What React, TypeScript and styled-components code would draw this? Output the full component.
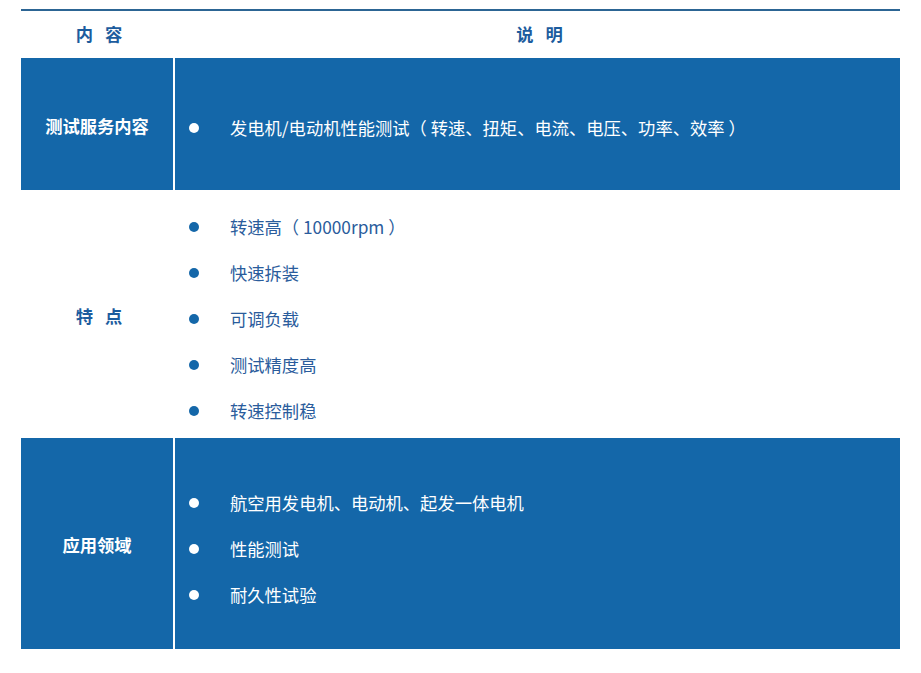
import React from "react";
import styled, { createGlobalStyle } from "styled-components";

const Global = createGlobalStyle`
  html, body { margin: 0; padding: 0; background: #fff; }
  body { font-family: "Noto Sans CJK SC", "Noto Sans", sans-serif; }
`;

const Page = styled.div`
  padding: 9px 21px 0 21px;
  width: 879px;
`;

const Table = styled.div`
  display: grid;
  grid-template-columns: 152px 2px 1fr;
  border-top: 2px solid #2c6594;
`;

const HeadCell = styled.div`
  height: 47px;
  display: flex;
  align-items: center;
  justify-content: center;
  font-size: 17.3px;
  font-weight: 700;
  letter-spacing: 4px;
  color: #1c5c9e;
  padding: 0 0 2px 8px;
  box-sizing: border-box;
`;

const Cell = styled.div<{ $blue?: boolean }>`
  background: ${(p) => (p.$blue ? "#1467a9" : "#fff")};
  display: flex;
  align-items: center;
`;

const LabelCell = styled(Cell)<{ $blue?: boolean; $spaced?: boolean }>`
  justify-content: center;
  font-size: 17.3px;
  font-weight: 700;
  letter-spacing: ${(p) => (p.$spaced ? "4px" : "0")};
  color: ${(p) => (p.$blue ? "#fff" : "#1c5c9e")};
  padding: 2px 0 0 ${(p) => (p.$spaced ? "8px" : "0")};
`;

const Divider = styled.div`
  background: #fff;
`;

const List = styled.ul<{ $blue?: boolean; $pt: number; $pb: number }>`
  list-style: none;
  margin: 0;
  padding: ${(p) => p.$pt}px 0 ${(p) => p.$pb}px 14px;
  width: 100%;
  color: ${(p) => (p.$blue ? "#fff" : "#2a5c9c")};
`;

const Item = styled.li<{ $blue?: boolean }>`
  height: 46px;
  display: flex;
  align-items: center;
  font-size: 17.3px;
  &::before {
    content: "";
    width: 10px;
    height: 10px;
    border-radius: 50%;
    margin-right: 31px;
    margin-top: 1px;
    background: ${(p) => (p.$blue ? "#fff" : "#1467a9")};
    flex: none;
  }
`;

type Row = {
  label: string;
  blue: boolean;
  spaced?: boolean;
  items: string[];
  pt: number;
  pb: number;
};

const rows: Row[] = [
  {
    label: "测试服务内容",
    blue: true,
    items: ["发电机/电动机性能测试（ 转速、扭矩、电流、电压、功率、效率 ）"],
    pt: 46,
    pb: 40,
  },
  {
    label: "特\u00a0点",
    blue: false,
    spaced: true,
    items: ["转速高（ 10000rpm ）", "快速拆装", "可调负载", "测试精度高", "转速控制稳"],
    pt: 13,
    pb: 5,
  },
  {
    label: "应用领域",
    blue: true,
    items: ["航空用发电机、电动机、起发一体电机", "性能测试", "耐久性试验"],
    pt: 41,
    pb: 32,
  },
];

export default function App() {
  return (
    <>
      <Global />
      <Page>
        <Table>
          <HeadCell>内&nbsp;容</HeadCell>
          <div />
          <HeadCell>说&nbsp;明</HeadCell>
          {rows.map((r) => (
            <React.Fragment key={r.label}>
              <LabelCell $blue={r.blue} $spaced={r.spaced}>
                {r.label}
              </LabelCell>
              <Divider />
              <Cell $blue={r.blue}>
                <List $blue={r.blue} $pt={r.pt} $pb={r.pb}>
                  {r.items.map((t) => (
                    <Item key={t} $blue={r.blue}>
                      {t}
                    </Item>
                  ))}
                </List>
              </Cell>
            </React.Fragment>
          ))}
        </Table>
      </Page>
    </>
  );
}
